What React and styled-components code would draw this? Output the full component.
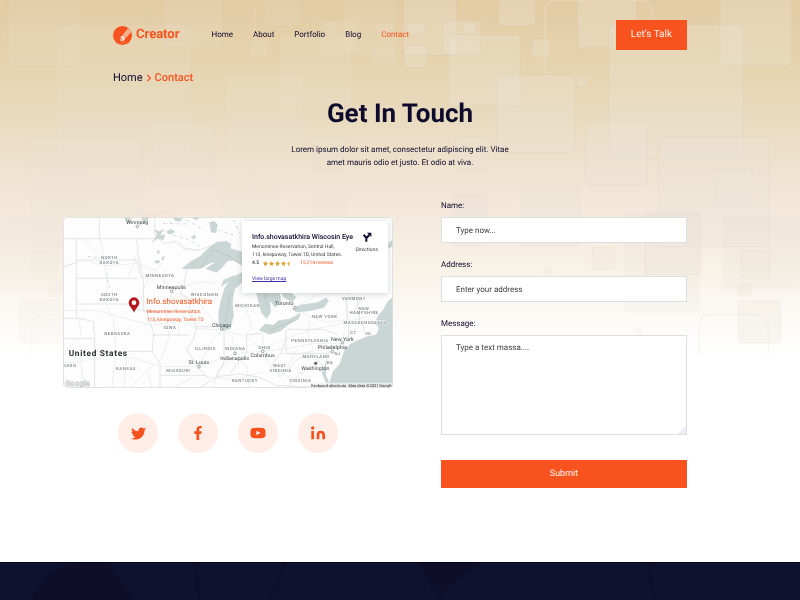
import React from "react";
import styled, { createGlobalStyle } from "styled-components";
import { FaTwitter, FaFacebookF, FaStar, FaStarHalf } from "react-icons/fa";

const orange = "#f8531f";
const ink = "#0d0a2c";

const GlobalStyle = createGlobalStyle`
  *, *::before, *::after { box-sizing: border-box; }
  body {
    margin: 0;
    background: #fff;
    color: ${ink};
    font-family: Roboto, "Liberation Sans", sans-serif;
    font-size: 8px;
    line-height: 12px;
    text-rendering: geometricPrecision;
  }
  a { color: inherit; text-decoration: none; }
  h1, h2, p, ul, ol { margin: 0; padding: 0; }
  ul, ol { list-style: none; }
  button, input, textarea { font: inherit; color: inherit; text-rendering: inherit; }
`;

const Page = styled.div`
  position: relative;
  isolation: isolate;
  display: flex;
  flex-direction: column;
  min-height: 100vh;
`;

const Backdrop = styled.div`
  position: absolute;
  inset: 0 0 auto;
  z-index: -1;
  height: 355px;
  background: linear-gradient(
    #e3cba2 0,
    #e6d3ae 60px,
    #e9dabe 115px,
    #efe2cf 170px,
    #f3e8da 205px,
    #f7f0e4 260px,
    #fcf9f4 310px,
    #ffffff 355px
  );

  svg { display: block; width: 100%; height: 100%; }
`;

const Header = styled.header`
  display: flex;
  align-items: center;
  padding: 20px 113px 0;
`;

const Logo = styled.a`
  display: flex;
  align-items: center;
  gap: 4px;
  margin-right: 32px;
  color: ${orange};
  font-size: 13px;
  font-weight: 700;
  line-height: 18px;

  svg { width: 19px; height: 19px; }
`;

const Nav = styled.nav`
  display: flex;
  gap: 20px;
  margin-right: auto;
`;

const NavLink = styled.a`
  color: ${(p) => (p.$active ? orange : ink)};
`;

const Button = styled.button`
  border: 0;
  background: ${orange};
  color: #fff0e8;
  cursor: pointer;
  font-size: ${(p) => (p.$wide ? 9 : 10)}px;
  line-height: 12px;
  padding: ${(p) => (p.$wide ? "8px 14px" : "9px 15px")};
`;

const Breadcrumb = styled.ol`
  display: flex;
  align-items: center;
  gap: 4px;
  padding: 21px 113px 0;
  font-size: 11px;
  line-height: 14px;

  svg { display: block; width: 4px; height: 8px; }
`;

const Crumb = styled.li`
  color: ${(p) => (p.$active ? orange : ink)};
  font-weight: ${(p) => (p.$active ? 500 : 400)};
`;

const Intro = styled.section`
  display: flex;
  flex-direction: column;
  align-items: center;
  gap: 13px;
  padding-top: 13px;
  text-align: center;

  h1 { font-size: 26px; line-height: 32px; font-weight: 700; }
  p { max-width: 230px; line-height: 13px; }
`;

const Content = styled.main`
  display: grid;
  grid-template-columns: 330fr 246fr;
  column-gap: 48px;
  padding: 31px 113px 74px 63px;
`;

const Location = styled.section`
  padding-top: 17px;
`;

const MapFrame = styled.div`
  position: relative;
  overflow: hidden;
  border-radius: 4px;
  background: #fff;
`;

const MapSvg = styled.svg`
  display: block;
  width: 100%;
  font-family: Roboto, "Liberation Sans", sans-serif;
`;

const PlaceCard = styled.article`
  position: absolute;
  top: 4px;
  right: 5px;
  display: flex;
  justify-content: space-between;
  width: 146px;
  padding: 11px 10px 10px;
  background: #fff;
  box-shadow: 0 1px 6px rgba(30, 40, 70, 0.2);
  font-size: 5px;
  line-height: 8px;
  color: #3b3b48;
`;

const PlaceInfo = styled.div`
  min-width: 0;
`;

const PlaceName = styled.h2`
  color: ${ink};
  font-size: 7px;
  line-height: 10px;
  font-weight: 500;
  white-space: nowrap;
`;

const PlaceAddress = styled.p`
  padding-top: 1px;
  white-space: nowrap;
`;

const Rating = styled.div`
  display: flex;
  align-items: center;
  gap: 4px;
  font-weight: 500;
`;

const Stars = styled.span`
  display: flex;
  gap: 1px;
  margin-right: 4px;
  color: #dfa43c;

  svg { width: 5px; height: 5px; }
`;

const Reviews = styled.a`
  color: ${orange};
  font-weight: 400;
`;

const LargeMapLink = styled.a`
  display: inline-block;
  margin-top: 8px;
  color: #3a2fa8;
  text-decoration: underline;
`;

const Directions = styled.a`
  display: flex;
  flex-direction: column;
  align-items: center;
  gap: 4px;
  align-self: flex-start;

  svg { width: 10px; height: 10px; }
`;

const Socials = styled.ul`
  display: flex;
  justify-content: center;
  gap: 20px;
  padding-top: 25px;
`;

const SocialLink = styled.a`
  display: grid;
  place-items: center;
  width: 40px;
  height: 40px;
  border-radius: 50%;
  background: #ffede7;
  color: ${orange};
`;

const Form = styled.form`
  display: flex;
  flex-direction: column;
`;

const Field = styled.label`
  display: flex;
  flex-direction: column;
  gap: 5px;
  padding-bottom: ${(p) => (p.$last ? 25 : 16)}px;
`;

const Input = styled.input`
  width: 100%;
  height: 26px;
  padding: 0 14px;
  border: 1px solid #dedee2;
  border-radius: 0;
  background: #fff;

  &::placeholder { color: #3e3e44; opacity: 1; }
`;

const TextArea = styled.textarea`
  display: block;
  width: 100%;
  height: 100px;
  padding: 6px 14px;
  border: 1px solid #dedee2;
  border-radius: 0;
  resize: none;
  background: linear-gradient(135deg, transparent 50%, #ececf2 50%) right bottom / 9px 9px no-repeat #fff;

  &::placeholder { color: #3e3e44; opacity: 1; }
`;

const Footer = styled.footer`
  flex: 1;
  min-height: 38px;
  overflow: hidden;
  border-top: 1px solid #03031b;
  background: #0e122f;

  svg { display: block; width: 100%; }
`;

const tiles = [
  [1210, -20, 160, 185], [1220, 68, 54, 34], [1330, 62, 110, 102], [1212, 137, 69, 68],
  [1345, 105, 215, 213], [1392, 66, 34, 36], [1496, -20, 110, 97], [1595, 118, 57, 54],
  [1490, 224, 234, 233], [1732, -20, 178, 163], [1826, 74, 404, 402], [2160, -20, 215, 217],
  [1757, 367, 186, 187], [1976, 410, 332, 330], [2144, 507, 112, 112],
  [1561, 560, 177, 178], [1367, 411, 97, 97], [1776, 742, 68, 68], [1935, 644, 168, 180],
  [2225, 753, 84, 83], [2215, 850, 40, 39], [2215, 902, 127, 127], [1730, 230, 34, 30],
];

const shades = [
  [1870, 632, 230, 306], [2168, 645, 232, 228], [1355, 580, 110, 160], [1630, 803, 27, 30], [1900, 984, 26, 24],
];

function TileField() {
  return (
    <g>
      {shades.map(([x, y, w, h]) => (
        <rect key={`${x}-${y}`} x={x} y={y} width={w} height={h} rx="18" fill="#8d8778" opacity=".03" />
      ))}
      {tiles.map(([x, y, w, h], i) => (
        <rect key={i} x={x} y={y} width={w} height={h} rx="10" fill="#ebe5d8" fillOpacity=".3" stroke="#a5a08c" strokeOpacity=".07" strokeWidth="3" />
      ))}
      <path
        d="M1635 220V40Q1635 0 1675 0H1920Q1960 0 1960 60M1640 476V556M1970 476V560M2098 1065V980Q2098 944 2134 944H2270Q2305 944 2305 980V1065"
        fill="none" stroke="#eee6d8" strokeWidth="4" opacity=".4"
      />
    </g>
  );
}

function BackdropArt() {
  return (
    <Backdrop>
      <svg viewBox="0 0 2400 1065" preserveAspectRatio="xMidYMin slice" aria-hidden="true">
        <TileField />
        <g transform="translate(2400) scale(-1 1)" opacity=".5"><TileField /></g>
      </svg>
    </Backdrop>
  );
}

const states = [
  ["NORTH", 328, 778], ["DAKOTA", 328, 791], ["SOUTH", 328, 889], ["DAKOTA", 328, 902],
  ["MINNESOTA", 480, 831], ["WISCONSIN", 614, 888], ["NEBRASKA", 352, 1004], ["IOWA", 510, 987],
  ["KANSAS", 378, 1109], ["RADO", 209, 1102], ["MISSOURI", 535, 1115], ["ILLINOIS", 616, 1050],
  ["INDIANA", 705, 1050], ["OHIO", 794, 1047], ["MICHIGAN", 743, 921], ["NEW YORK", 974, 953],
  ["VERMONT", 1062, 900], ["NEW", 1092, 930], ["HAMPSHIRE", 1092, 943], ["MASSACHUSETTS", 1095, 971],
  ["CT", 1060, 1002], ["RI", 1106, 1005], ["PENNSYLVANIA", 930, 1027], ["MARYLAND", 948, 1074],
  ["NJ", 1013, 1066], ["DE", 990, 1091], ["WEST", 840, 1102], ["VIRGINIA", 842, 1115],
  ["KENTUCKY", 735, 1146], ["VIRGINIA", 901, 1146],
];

const cities = [
  ["Winnipeg", 412, 673, 412, 679], ["Minneapolis", 514, 866, 515, 874], ["Chicago", 665, 980, 665, 987],
  ["Toronto", 853, 915, 885, 923], ["St. Louis", 596, 1093, 597, 1100], ["Indianapolis", 704, 1079, 705, 1060],
  ["Columbus", 788, 1071, 788, 1054], ["New York", 1027, 1022, 1027, 1028], ["Philadelphia", 997, 1047, 997, 1055],
  ["Washington", 946, 1109, 947, 1090],
];

const lakes = [
  "M546 806L574 784 600 770 626 744 650 727 680 724 693 733 690 746 726 756 740 790 722 792 700 781 684 782 668 800 650 817 618 806 650 785 632 788 606 803 586 806Z",
  "M656 940L664 900 674 865 690 842 664 858 672 840 700 828 728 836 718 855 704 866 697 900 700 950 690 986 668 992 658 976Z",
  "M690 836L726 818 790 832 800 870 838 870 842 905 826 922 808 900 812 936 800 955 786 940 776 905 770 880 745 862 728 850Z",
  "M836 862L866 872 888 892 876 906 852 892Z",
  "M778 990L796 972 820 976 836 962 868 958 902 940 894 958 870 970 842 992 808 1003Z",
  "M876 926L908 914 952 908 978 894 986 902 972 922 930 932 890 936Z",
  "M1179 892L1164 904 1150 930 1134 948 1126 970 1138 984 1130 1004 1096 1012 1052 1032 1034 1050 1020 1092 1000 1114 984 1164H1179Z",
  "M629 668L642 664 652 674 648 698 634 696Z",
  "M458 726L472 702 466 690 480 696 490 688 480 708 494 704 490 720 474 714Z",
  "M374 651L392 651 388 668 378 664ZM424 651L446 651 442 662 430 664Z",
  "M520 652L548 656 540 664 526 662ZM576 652l10 8 12-6ZM500 694l16-6 8 8-14 6ZM574 712l10-6 4 6-8 5Z",
  "M470 756l8-5-2 11ZM464 784l12-3 4 5-12 4ZM484 776l8-8-2 12ZM1179 718l-12 12-2 14 14-6Z",
  "M966 1118l8-20 6-20-4 46 10 22-6 4Z",
];

const borders = [
  "M189 716H460M298 651V716M229 716V835M229 835H414M189 800L229 788M229 780H410L424 835M232 912H380L410 928 440 932 452 975M229 835V955M189 955H238L280 965 284 1015M189 1016H284V1054M280 1054H456M284 1054V1164M452 975L462 1000 456 1054 480 1090M480 1090V1164M430 835V935H560M456 1005L568 1005M570 940L590 980 580 1020 560 1050 600 1110 630 1140",
  "M464 651V702L490 730 530 724 556 746 598 750 640 735M410 716L414 760 430 835M560 806L552 858 540 880 572 904 568 940M590 980H662M672 998V1088L650 1130M740 1000V1060L716 1088 690 1120M740 1004L786 1000M858 988V1060H985L1006 1040M862 988H970L1010 1002M860 1010L842 1060 816 1094M1036 895L1046 970H1126M1060 935L1084 900M1046 970V1028M1088 970L1096 1008M1072 900L1080 970",
  "M598 1164L650 1130 716 1122 780 1132 830 1156 960 1164M816 1094L840 1130 890 1080 930 1062 970 1100M482 1126H620",
];

const roads = [
  "M189 805L250 780 310 798 414 790 470 812 515 874 590 900 640 960 665 990 740 1010 788 1054 860 1046 940 1030 1020 1030",
  "M300 716L316 800 322 864 312 900 340 960 348 1050 336 1164M248 716L270 740 300 770M189 932L290 930 350 948 456 976 540 964 590 985 660 990",
  "M189 1090L260 1082 340 1064 420 1080 482 1100 597 1100 705 1060 788 1054 842 1022 930 990 1030 970 1110 948",
  "M515 874L500 940 508 1010 484 1078 430 1122 390 1164M597 1100L630 1030 665 990M705 1060L696 1010 665 990M705 1060L740 1100 748 1164M597 1100L580 1130 520 1164M788 1054L820 1110 880 1136 947 1090 997 1055 1027 1028 1060 990 1110 960",
  "M885 923L930 950 974 966 1034 960M788 1054L790 1005M947 1090L900 1120 860 1164M700 900L740 930 758 990M930 950L924 1000 946 1070M1044 882L1040 950 1027 1028M885 923L960 880 1060 880M620 1130L700 1140 790 1115M410 760L398 800 380 840M236 950L244 1010 200 1050M442 1110L456 1164M640 1164L654 1110 690 1080",
  "M520 720L548 748 600 752M490 790L450 822 430 870 400 900M552 858L600 846 650 850M380 1060L372 1164M240 1064L250 1164M560 1050L598 1100M536 1010L536 964M842 1060L890 1064 940 1052M850 1130L862 1100 890 1050",
];

function MapDrawing() {
  return (
    <MapSvg viewBox="189 651 990 513" role="img" aria-label="Map of the northern United States">
      <rect x="189" y="651" width="990" height="513" fill="#fdfdfd" />
      <g fill="none" stroke="#eeefef" strokeWidth="3">{roads.map((d) => <path key={d} d={d} />)}</g>
      <g fill="none" stroke="#e3e4e4" strokeWidth="3">{borders.map((d) => <path key={d} d={d} />)}</g>
      <g fill="#c9d6d3" stroke="#c9d6d3" strokeWidth="2" strokeLinejoin="round">{lakes.map((d) => <path key={d} d={d} />)}</g>
      <path d="M600 806L640 750 690 770 730 800M676 965L690 880M810 990L880 962M790 850L800 920" fill="none" stroke="#b3c2bf" strokeWidth="2" />
      <g fill="none" stroke="#c5d2cf" strokeWidth="3" strokeDasharray="7 5 2 6">
        <path d="M482 690L520 706 560 716 600 740M560 660L610 690M655 690L700 705M264 770L310 774M320 820L328 864M490 670L560 672M700 660L720 700" />
      </g>
      <g fontSize="13" fontWeight="500" fill="#7c7f82" letterSpacing="1.5" textAnchor="middle" stroke="#fff" strokeWidth="2" paintOrder="stroke">
        {states.map(([name, x, y]) => <text key={`${name}${x}${y}`} x={x} y={y}>{name}</text>)}
      </g>
      {cities.map(([name, x, y, cx, cy]) => (
        <g key={name}>
          <circle cx={cx} cy={cy} r="4" fill={name === "Washington" ? "#555" : "#fff"} stroke="#777" strokeWidth="2" />
          <text x={x} y={y} fontSize="16" fill="#45484b" textAnchor="middle">{name}</text>
        </g>
      ))}
      <text x="206" y="1069" fontSize="25" fontWeight="700" letterSpacing="2" fill="#2e3032">United States</text>
      <text x="194" y="1158" fontSize="24" fontWeight="700" fill="#fff" stroke="#c9cbcc" strokeWidth="2">Google</text>
      <rect x="930" y="1148" width="249" height="16" fill="#f3f5f5" opacity=".8" />
      <text x="934" y="1160" fontSize="12" fill="#222">Keyboard shortcuts</text>
      <text x="1176" y="1160" fontSize="12" fill="#222" textAnchor="end">Map data ©2021 Google</text>
      <path d="M402 938C397 924 386 918 386 908a16 16 0 0 1 32 0C418 918 407 924 402 938Z" fill="#b7161c" />
      <circle cx="402" cy="908" r="7" fill="#fff" />
      <g fill={orange}>
        <text x="439" y="913" fontSize="24">Info.shovasatkhira</text>
        <text x="440" y="938" fontSize="15">Menominee Reservation</text>
        <text x="440" y="962" fontSize="15">113, kinepoway, Tower.TD</text>
      </g>
      <rect x="190" y="652" width="988" height="511" rx="12" fill="none" stroke="#dcdddd" strokeWidth="3" />
    </MapSvg>
  );
}

function LogoMark() {
  return (
    <svg viewBox="0 0 54 54" aria-hidden="true">
      <circle cx="27" cy="27" r="27" fill={orange} />
      <path d="M43 6L52 17 36 34 28 25Z" fill="#f8b08c" />
      <path d="M27 26L35 34 31 41 20 43 23 30Z" fill="#ffe9d6" />
      <path d="M20 43L28 34" stroke={orange} strokeWidth="2" />
      <path d="M30 43L35 47M24 45L28 48" stroke="#f8b08c" strokeWidth="2" />
    </svg>
  );
}

const socials = [
  { name: "Twitter", icon: <FaTwitter size={15} /> },
  { name: "Facebook", icon: <FaFacebookF size={14} /> },
  {
    name: "YouTube",
    icon: (
      <svg width="16" height="16" viewBox="0 0 48 48">
        <path d="M9 9Q24 7 39 9Q45 10 46 15Q47 24 46 33Q45 38 39 39Q24 41 9 39Q3 38 2 33Q1 24 2 15Q3 10 9 9Z" fill="currentColor" />
        <path d="M19 17V31L32 24Z" fill="#ffede7" />
      </svg>
    ),
  },
  {
    name: "LinkedIn",
    icon: (
      <svg width="16" height="16" viewBox="0 0 48 48">
        <circle cx="8" cy="9" r="5" fill="currentColor" />
        <path d="M8 18V43M24 43V30Q24 21 32 21Q41 21 41 30V43" fill="none" stroke="currentColor" strokeWidth="8" />
      </svg>
    ),
  },
];

export default function App() {
  return (
    <Page>
      <GlobalStyle />
      <BackdropArt />
      <Header>
        <Logo href="#"><LogoMark />Creator</Logo>
        <Nav>
          {["Home", "About", "Portfolio", "Blog", "Contact"].map((item) => (
            <NavLink key={item} href="#" $active={item === "Contact"}>{item}</NavLink>
          ))}
        </Nav>
        <Button type="button">Let’s Talk</Button>
      </Header>
      <Breadcrumb>
        <Crumb><a href="#">Home</a></Crumb>
        <li aria-hidden="true">
          <svg viewBox="0 0 12 24" fill="none" stroke={orange} strokeWidth="4"><path d="M1 3L10 12 1 21" /></svg>
        </li>
        <Crumb $active>Contact</Crumb>
      </Breadcrumb>
      <Intro>
        <h1>Get In Touch</h1>
        <p>Lorem ipsum dolor sit amet, consectetur adipiscing elit. Vitae amet mauris odio et justo. Et odio at viva.</p>
      </Intro>
      <Content>
        <Location>
          <MapFrame>
            <MapDrawing />
            <PlaceCard>
              <PlaceInfo>
                <PlaceName>Info.shovasatkhira Wiscosin Eye</PlaceName>
                <PlaceAddress>Menominee Reservation, Sentral Hall,<br />113, kinepoway, Tower.TD, United States.</PlaceAddress>
                <Rating>
                  4.5
                  <Stars><FaStar /><FaStar /><FaStar /><FaStar /><FaStarHalf /></Stars>
                  <Reviews href="#">15,214 reviews</Reviews>
                </Rating>
                <LargeMapLink href="#">View large map</LargeMapLink>
              </PlaceInfo>
              <Directions href="#">
                <svg viewBox="0 0 30 30" aria-hidden="true">
                  <path d="M13 29V18L22 9M12 17L5 8" fill="none" stroke={ink} strokeWidth="6" />
                  <path d="M15 2H28V15Z" fill={ink} />
                </svg>
                Directions
              </Directions>
            </PlaceCard>
          </MapFrame>
          <Socials>
            {socials.map(({ name, icon }) => (
              <li key={name}><SocialLink href="#" aria-label={name}>{icon}</SocialLink></li>
            ))}
          </Socials>
        </Location>
        <Form onSubmit={(e) => e.preventDefault()}>
          <Field>Name:<Input type="text" name="name" placeholder="Type now..." /></Field>
          <Field>Address:<Input type="text" name="address" placeholder="Enter your address" /></Field>
          <Field $last>Message:<TextArea name="message" placeholder="Type a text massa...." /></Field>
          <Button type="submit" $wide>Submit</Button>
        </Form>
      </Content>
      <Footer>
        <svg viewBox="0 0 800 37" aria-hidden="true">
          <path d="M30 37L48 10 75 0H108L134 37ZM420 0H480L440 30Z" fill="#0e0e29" />
          <path d="M285 0L270 37M195 0L199 37M648 0L655 37M420 0L440 37" stroke="#0d0f2b" strokeWidth="3" />
        </svg>
      </Footer>
    </Page>
  );
}
